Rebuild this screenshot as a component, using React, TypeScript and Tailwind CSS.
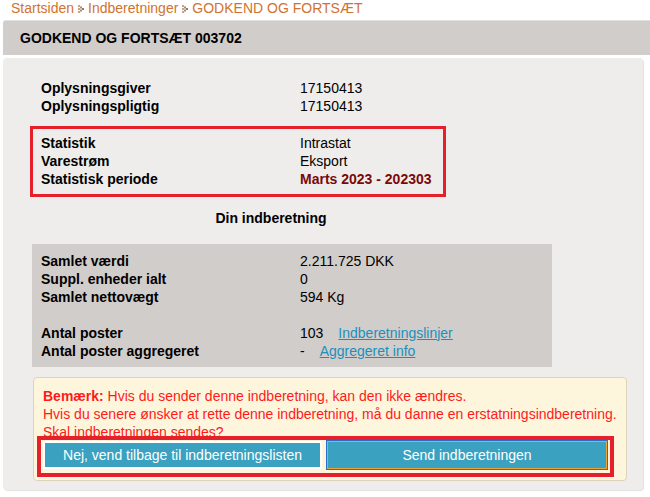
import React from "react";

type Row = { label: string; value: React.ReactNode };

const top: Row[] = [
  { label: "Oplysningsgiver", value: "17150413" },
  { label: "Oplysningspligtig", value: "17150413" },
];

const stat: Row[] = [
  { label: "Statistik", value: "Intrastat" },
  { label: "Varestrøm", value: "Eksport" },
  {
    label: "Statistisk periode",
    value: <span className="font-bold text-[#7a0a0a]">Marts 2023 - 202303</span>,
  },
];

function Crumb() {
  return (
    <svg width="6" height="8" viewBox="0 0 6 8" className="mx-[4px] inline-block">
      <rect x="0" y="0" width="2" height="2" fill="#c9a27e" />
      <rect x="0" y="3" width="2" height="2" fill="#c9a27e" />
      <rect x="0" y="6" width="2" height="2" fill="#c9a27e" />
      <rect x="2" y="1.5" width="2" height="2" fill="#a88a70" />
      <rect x="2" y="4.5" width="2" height="2" fill="#a88a70" />
      <rect x="4" y="3" width="2" height="2" fill="#8c7a6a" />
    </svg>
  );
}

function Rows({ rows, labelW }: { rows: Row[]; labelW: string }) {
  return (
    <div>
      {rows.map((r) => (
        <div key={r.label} className="flex h-[18px] items-center">
          <div className={`${labelW} font-bold`}>{r.label}</div>
          <div>{r.value}</div>
        </div>
      ))}
    </div>
  );
}

export default function App() {
  return (
    <div className="w-[650px] h-[497px] bg-white text-[14px] text-black font-['Liberation_Sans',Arial,sans-serif] overflow-hidden">
      {/* breadcrumb */}
      <div className="flex items-center h-[17px] pl-[11px] text-[#d2722e]">
        <span>Startsiden</span>
        <Crumb />
        <span>Indberetninger</span>
        <Crumb />
        <span>GODKEND OG FORTSÆT</span>
      </div>

      {/* header */}
      <div className="ml-[3px] mt-[3px] h-[35px] rounded-tl-[3px] bg-[#d1cdca] border-t border-[#e2e0de] flex items-center pl-[17px] font-bold">
        GODKEND OG FORTSÆT 003702
      </div>

      {/* panel */}
      <div className="ml-[3px] mt-[3px] w-[640px] rounded-[4px] bg-[#eeedeb] shadow-[1px_1px_1px_rgba(0,0,0,0.12)] pt-[21px] pb-[9px]">
        <div className="pl-[38px]">
          <Rows rows={top} labelW="w-[259px]" />
        </div>

        <div className="ml-[27px] mt-[11px] w-[416px] border-[3px] border-[#e5202a] pl-[8px] pt-[5px] pb-[6px]">
          <Rows rows={stat} labelW="w-[259px]" />
        </div>

        <div className="ml-[25px] mt-[12px] w-[486px] text-center font-bold h-[18px] leading-[18px]">
          Din indberetning
        </div>

        <div className="ml-[29px] mt-[17px] w-[520px] bg-[#d1cdca] pl-[9px] pt-[8px] pb-[7px]">
          <Rows
            rows={[
              { label: "Samlet værdi", value: "2.211.725 DKK" },
              { label: "Suppl. enheder ialt", value: "0" },
              { label: "Samlet nettovægt", value: "594 Kg" },
            ]}
            labelW="w-[259px]"
          />
          <div className="h-[18px]" />
          <Rows
            rows={[
              {
                label: "Antal poster",
                value: (
                  <span>
                    103
                    <a className="ml-[15px] text-[#1d8fbc] underline cursor-pointer">Indberetningslinjer</a>
                  </span>
                ),
              },
              {
                label: "Antal poster aggregeret",
                value: (
                  <span>
                    -
                    <a className="ml-[15px] text-[#1d8fbc] underline cursor-pointer">Aggregeret info</a>
                  </span>
                ),
              },
            ]}
            labelW="w-[259px]"
          />
        </div>

        <div className="ml-[30px] mt-[10px] w-[594px] rounded-[4px] border border-[#ddd2bb] bg-[#fdf6dc] pt-[9px] pb-[3px] text-[#ff1a1a]">
          <div className="pl-[9px] leading-[18px]">
            <div>
              <span className="font-bold">Bemærk:</span> Hvis du sender denne indberetning, kan den ikke ændres.
            </div>
            <div>Hvis du senere ønsker at rette denne indberetning, må du danne en erstatningsindberetning.</div>
            <div>Skal indberetningen sendes?</div>
          </div>
          <div className="relative ml-[3px] -mt-[5px] w-[577px] border-4 border-[#e5202a] flex gap-[5px] pl-[2px] pr-[3px] pt-[1px] pb-[4px]">
            <button className="w-[279px] h-[28px] bg-[#3aa1c0] border-2 border-white text-white text-[14px]">
              Nej, vend tilbage til indberetningslisten
            </button>
            <button className="w-[280px] h-[28px] bg-[#3aa1c0] border border-[#e8a23a] ring-1 ring-[#2a6fc9] text-white text-[14px]">
              Send indberetningen
            </button>
          </div>
        </div>
      </div>
    </div>
  );
}
